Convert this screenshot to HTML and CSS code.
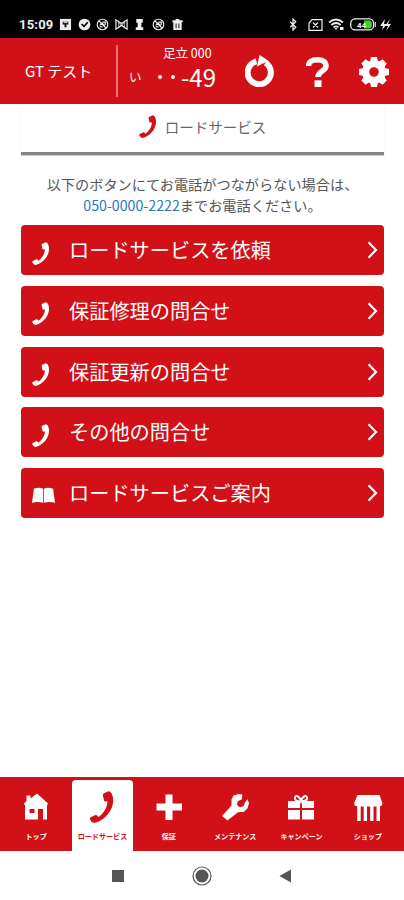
FILE: index.html
```
<!DOCTYPE html>
<html lang="ja">
<head>
<meta charset="utf-8">
<meta name="viewport" content="width=device-width, initial-scale=1">
<title>ロードサービス</title>
<link rel="stylesheet" href="styles.css">
</head>
<body>
<svg class="defs" aria-hidden="true">
  <symbol id="phone" viewBox="0 0 24 31"><path d="M14 2.2 18.2.2Q20 .1 21.3 2.4C26.500 13 18 27 5.800 30.700Q3.300 31.300 1.800 29.800L.2 27.200Q0 26.300 1 25.500L5.700 23.200Q6.800 23 7.500 24L8.500 25.300C13.500 22 17.500 15 17.200 10L15.400 10.200Q14.300 10.200 13.900 9L12.800 4.200Q12.700 2.900 14 2.200Z"/></symbol>
  <symbol id="chevron" viewBox="0 0 11 18"><path d="M1.500 1.300 9 9l-7.500 7.700" fill="none" stroke="currentColor" stroke-width="2.200"/></symbol>
  <symbol id="book" viewBox="0 0 24 17"><path d="M2 1.500Q7.500-.5 11.600 1.500V16Q6 14.500 0 16ZM22 1.500Q16.500-.5 12.400 1.500V16Q18 14.500 24 16Z"/></symbol>
  <symbol id="nolink" viewBox="0 0 14 14"><g fill="none" stroke="currentColor"><circle cx="7" cy="7" r="5.700" stroke-width="1.200"/><path d="M3 3l8 8M4 8l2.500-2.500 3 3M7 4.500h3v3M4 9.500h3" stroke-width="1.300"/></g></symbol>
</svg>

<div class="status">
  <span class="clock">15:09</span>
  <div class="notices">
    <svg viewBox="0 0 14 14"><path d="M1 1h12v12H1z"/><path d="M4 4h6v3H8v3H6V7H4z" fill="#000"/><path d="M5 5h4" stroke="#fff"/></svg>
    <svg viewBox="0 0 14 14"><circle cx="7" cy="7" r="6.300"/><path d="M3.800 6.500 6.500 9l4-4.500" fill="none" stroke="#000" stroke-width="1.700"/></svg>
    <svg><use href="#nolink"/></svg>
    <svg viewBox="0 0 14 14"><path d="M1 12V2l6 4 6-4v10L7 8z" fill="none" stroke="currentColor" stroke-width="1.300"/><path d="M3 5l8 5M3 10l8-5M4 3v8M10 3v8" stroke="currentColor" stroke-width=".7"/></svg>
    <svg viewBox="0 0 14 14"><path d="M3.500 1h7v4H9v5h2v3H3v-3h2V5H3.500z"/></svg>
    <svg><use href="#nolink"/></svg>
    <svg viewBox="0 0 14 14"><path d="M1.500 2.500H5V1h4v1.500h3.500v2h-1V13h-9V4.500h-1z"/><path d="M5.500 6v5M8.500 6v5" stroke="#000"/></svg>
  </div>
  <div class="system">
    <svg class="bt" viewBox="0 0 8 14"><path d="M1 4l6 6-3 3V1l3 3-6 6" fill="none" stroke="currentColor" stroke-width="1.300"/></svg>
    <svg class="sim" viewBox="0 0 15 12"><path d="M4 .7h10v10.600H1V4zM5 3.500l5 5M10 3.500l-5 5" fill="none" stroke="currentColor" stroke-width="1.200"/></svg>
    <svg class="wifi" viewBox="0 0 17 13"><path d="M1 4.500Q8 -1.500 15 4.500M3.300 7Q8 3 12.700 7M5.500 9.300Q8 7.500 10.500 9.300" fill="none" stroke="currentColor" stroke-width="1.700"/><path d="M6.500 10h3L8 12zM12 9h3.500v3H12z"/></svg>
    <svg class="battery" viewBox="0 0 26 13"><rect x=".7" y=".9" width="23" height="11" rx="4.500" fill="none" stroke="currentColor" stroke-width="1.300"/><path d="M14 2.500h5q3 0 3 4t-3 4h-5z" fill="#43d31c"/><path d="M25.300 4v5" stroke="currentColor"/><text x="7" y="9.800">44</text></svg>
    <svg class="bolt" viewBox="0 0 11 12"><path d="M5 0 0 7h3l-1 4 5-6H4zM10 0 5 7h3l-2 5 5-7H8z"/></svg>
  </div>
</div>

<header class="header">
  <div class="user">GT テスト</div>
  <div class="plate">
    <div class="region">足立 000</div>
    <div class="number"><span class="kana">い</span><i></i><i></i><b>-49</b></div>
  </div>
  <div class="actions">
    <svg class="reload" viewBox="0 0 30 32"><path d="M20.500 7.800A11.600 11.600 0 1 1 11.500 6.300" fill="none" stroke="currentColor" stroke-width="6"/><path d="M14.500 0 23.500 5.700 12 11.500z"/></svg>
    <svg class="help" viewBox="0 0 23 30"><path d="M2.500 9C2.500 4.500 6 2.800 11.500 2.800s8.500 2.400 8.500 6.200c0 5-8 5-8 11" fill="none" stroke="currentColor" stroke-width="5.500"/><path d="M8.500 23.300h7V30h-7z"/></svg>
    <svg class="gear" viewBox="0 0 30 30"><g id="teeth"><path d="M12 0h6l1 5h-8zM12 30h6l1-5h-8zM0 12v6l5 1v-8zM30 12v6l-5 1v-8z"/></g><use href="#teeth" transform="rotate(45 15 15)"/><circle cx="15" cy="15" r="8.300" fill="none" stroke="currentColor" stroke-width="7"/></svg>
  </div>
</header>

<main class="main">
  <h1 class="title"><svg><use href="#phone"/></svg>ロードサービス</h1>
  <p class="info">以下のボタンにてお電話がつながらない場合は、<br><a>050-0000-2222</a>までお電話ください。</p>
  <div class="list">
    <a class="item"><svg class="phone"><use href="#phone"/></svg><span>ロードサービスを依頼</span><svg class="chevron"><use href="#chevron"/></svg></a>
    <a class="item"><svg class="phone"><use href="#phone"/></svg><span>保証修理の問合せ</span><svg class="chevron"><use href="#chevron"/></svg></a>
    <a class="item"><svg class="phone"><use href="#phone"/></svg><span>保証更新の問合せ</span><svg class="chevron"><use href="#chevron"/></svg></a>
    <a class="item"><svg class="phone"><use href="#phone"/></svg><span>その他の問合せ</span><svg class="chevron"><use href="#chevron"/></svg></a>
    <a class="item"><svg class="book"><use href="#book"/></svg><span>ロードサービスご案内</span><svg class="chevron"><use href="#chevron"/></svg></a>
  </div>
</main>

<nav class="tabs">
  <a class="tab"><svg viewBox="0 0 32 32"><path d="M6.500 4.500h4v3L17 2.500l11 10-1 2V28.500h-4V18h-5v10.500H5V14.500l-1-2 2.500-2.500z"/><path d="M9.500 18h5v4h-5z" fill="#d11018"/></svg><span>トップ</span></a>
  <a class="tab active"><svg><use href="#phone"/></svg><span>ロードサービス</span></a>
  <a class="tab"><svg viewBox="0 0 32 32"><path d="M12.500 3.500h7v9H29v7h-9.500V29h-7v-9.500H3.500v-7h9z"/></svg><span>保証</span></a>
  <a class="tab"><svg viewBox="0 0 32 32"><path d="M14.500 4.500 19.500 3l4 .5-.8 5-3.700 1.500-1.200 3.500 2.700 2.700 4-1 1.500-4 2.500-3 1.500 4-1.500 5-3.500 3.500-6 .5L8.500 29.500 3 25l9.500-10.500V8.500z"/></svg><span>メンテナンス</span></a>
  <a class="tab"><svg viewBox="0 0 32 32"><path d="M3 10h12v7H3zM17 10h12v7H17zM3 19h12v9.500H3zM17 19h12v9.500H17z"/><path d="M15.500 10.500Q9 10 10 6.500C11.500 3 15 6.500 16 10 17 6.500 20.500 3 22 6.500 23 10 17 10.500 15.500 10.500z" fill="#d11018" stroke="currentColor" stroke-width="2"/></svg><span>キャンペーン</span></a>
  <a class="tab"><svg viewBox="0 0 32 32"><path d="M5.500 4h22l3 8.500-1 2.500H28v15h-3.500V15.500h-3V30h-3.300V15.500H15V30h-3.300V15.500h-3V30H5.200V15H3l-1-2.500z"/></svg><span>ショップ</span></a>
</nav>
<div class="system-nav">
  <svg viewBox="0 0 20 20"><path d="M4 4h12v12H4z"/></svg>
  <svg viewBox="0 0 20 20"><circle cx="10" cy="10" r="9" fill="none" stroke="currentColor" stroke-width="1.200"/><circle cx="10" cy="10" r="6.500"/></svg>
  <svg viewBox="0 0 20 20"><path d="M15 3.500v13L3.500 10z"/></svg>
</div>
</body>
</html>
```

FILE: styles.css
```
* { box-sizing: border-box; }
body {
  margin: 0;
  height: 900px;
  display: flex;
  flex-direction: column;
  background: #fff;
  font-family: "Noto Sans CJK JP", sans-serif;
  overflow: hidden;
}
svg { display: block; flex: none; fill: currentColor; }
.defs { position: absolute; width: 0; height: 0; }

.status {
  height: 38px;
  flex: none;
  display: flex;
  align-items: center;
  padding: 11px 13px 0 19px;
  background: #000;
  color: #eee;
}
.clock { width: 40px; font: 700 13px/16px Roboto, sans-serif; letter-spacing: .2px; }
.notices { display: flex; gap: 5.600px; }
.notices svg { width: 13px; height: 13px; }
.system { display: flex; align-items: center; margin-left: auto; }
.bt { width: 8px; height: 13px; margin-right: 11px; }
.sim { width: 15px; height: 12px; margin-right: 5px; }
.wifi { width: 17px; height: 13px; margin-right: 5px; }
.battery { width: 26px; height: 13px; margin-right: 4px; font: 700 8px Roboto, sans-serif; }
.bolt { width: 11px; height: 12px; }

.header {
  height: 66px;
  flex: none;
  display: flex;
  align-items: center;
  background: #d11018;
  color: #fff;
}
.user {
  width: 118px;
  height: 52px;
  padding-left: 25px;
  border-right: 2px solid #e5777b;
  font-size: 15px;
  line-height: 52px;
  white-space: nowrap;
}
.plate { width: 100px; height: 66px; padding-top: 6px; }
.region { padding-left: 45px; font-size: 12.500px; line-height: 18px; white-space: nowrap; }
.number { display: flex; align-items: center; height: 29px; padding-left: 11px; }
.kana { width: 29px; font-size: 12.500px; line-height: 18px; }
.number i { width: 4px; height: 4px; margin-right: 9px; border-radius: 50%; background: #fff; }
.number b { margin-left: -3px; font-weight: 400; font-size: 24px; line-height: 29px; }
.actions { display: flex; align-items: center; margin-left: 27px; color: #fff; }
.reload { width: 30px; height: 32px; margin-right: 31px; }
.help { width: 23px; height: 30px; margin: 1px 30px 0 0; }
.gear { width: 30px; height: 30px; margin-top: 2px; }

.main { flex: 1; padding: 0 20px 0 21px; }
.title {
  display: flex;
  align-items: center;
  justify-content: center;
  height: 51px;
  margin: 0;
  padding-bottom: 3px;
  border-bottom: 3px solid #858585;
  box-shadow: 0 1px 1px #ccc;
  color: #666;
  font-size: 14.500px;
  font-weight: 400;
}
.title svg { width: 18px; height: 23px; margin-right: 8px; color: #d11018; }
.info { margin: 19px 0 9px; text-align: center; font-size: 14.200px; line-height: 21px; color: #555; white-space: nowrap; }
.info a { color: #2878c0; }
.list { display: flex; flex-direction: column; gap: 10.800px; }
.item {
  display: flex;
  align-items: center;
  height: 50px;
  padding: 0 6px 0 11px;
  border-radius: 4px;
  background: #d11018;
  color: #fff;
  font-size: 20.200px;
}
.item span { flex: 1; line-height: 30px; }
.phone { width: 18px; height: 23px; margin: 6px 19px 0 0; }
.book { width: 23px; height: 17px; margin: 4px 14px 0 0; }
.chevron { width: 11px; height: 18px; }

.tabs {
  height: 74px;
  flex: none;
  display: grid;
  grid-template-columns: repeat(6, 1fr);
  padding: 3px 3px 0;
  background: #d11018;
}
.tab {
  display: flex;
  flex-direction: column;
  align-items: center;
  margin: 0 3px;
  padding-top: 11px;
  color: #fff;
  font-size: 7.100px;
  font-weight: 700;
  line-height: 12px;
  white-space: nowrap;
}
.tab svg { width: 32px; height: 32px; margin-bottom: 7px; }
.tab.active { border-radius: 4px 4px 0 0; background: #fff; color: #d11018; }

.system-nav {
  height: 49px;
  flex: none;
  display: flex;
  align-items: center;
  justify-content: center;
  gap: 64px;
  color: #555;
}
.system-nav svg { width: 20px; height: 20px; }
```
